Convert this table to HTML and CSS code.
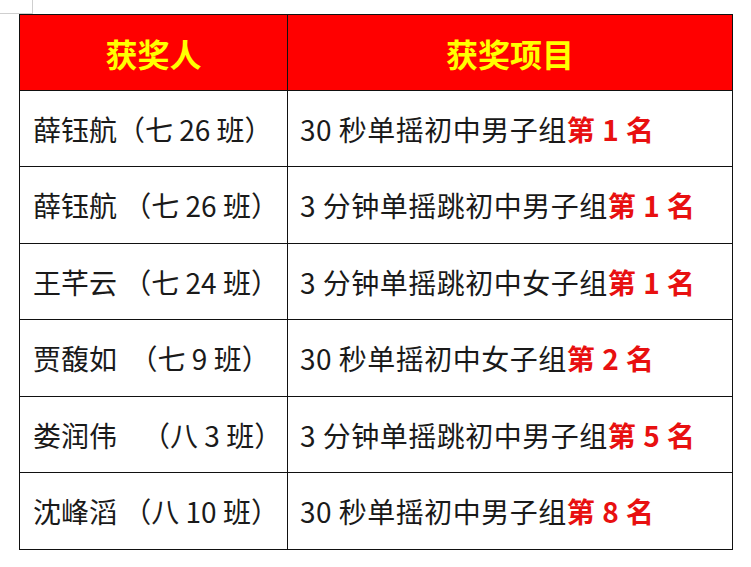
FILE: index.html
```html
<!DOCTYPE html>
<html lang="zh-CN">
<head>
<meta charset="utf-8">
<title>获奖名单</title>
<link rel="stylesheet" href="styles.css">
</head>
<body>
<div class="crop-mark"></div>
<div class="award-table">
  <div class="cell head">获奖人</div>
  <div class="cell head">获奖项目</div>

  <div class="cell name">薛钰航（七 26 班）</div>
  <div class="cell item">30 秒单摇初中男子组<span class="rank">第 1 名</span></div>

  <div class="cell name">薛钰航 （七 26 班）</div>
  <div class="cell item">3 分钟单摇跳初中男子组<span class="rank">第 1 名</span></div>

  <div class="cell name">王芊云 （七 24 班）</div>
  <div class="cell item">3 分钟单摇跳初中女子组<span class="rank">第 1 名</span></div>

  <div class="cell name">贾馥如 &nbsp;（七 9 班）</div>
  <div class="cell item">30 秒单摇初中女子组<span class="rank">第 2 名</span></div>

  <div class="cell name">娄润伟 &nbsp; &nbsp;（八 3 班）</div>
  <div class="cell item">3 分钟单摇跳初中男子组<span class="rank">第 5 名</span></div>

  <div class="cell name">沈峰滔 （八 10 班）</div>
  <div class="cell item">30 秒单摇初中男子组<span class="rank">第 8 名</span></div>
</div>
</body>
</html>
```

FILE: styles.css
```css
html, body {
  margin: 0;
  background: #ffffff;
}

body {
  padding: 14px 0 0 19px;
  font-family: "Noto Sans CJK SC", "Noto Sans", sans-serif;
  color: #1a1a1a;
}

.crop-mark {
  position: absolute;
  left: 0;
  top: 0;
  width: 32px;
  height: 13px;
  border-right: 1px solid #cfcfcf;
  border-bottom: 1px solid #cfcfcf;
}

.award-table {
  display: grid;
  grid-template-columns: 268px 445px;
  grid-template-rows: 76px 76px 77px 76px 77px 76px 77px;
  width: 713px;
  border-left: 1px solid #111111;
  border-top: 1px solid #111111;
}

.cell {
  box-sizing: border-box;
  border-right: 1px solid #111111;
  border-bottom: 1px solid #111111;
  display: flex;
  align-items: center;
  font-size: 28px;
  line-height: 1;
  white-space: pre;
}

.head {
  background: #ff0000;
  color: #ffff00;
  font-weight: bold;
  font-size: 32px;
  justify-content: center;
}

.name {
  padding-left: 13px;
}

.item {
  padding-left: 12px;
  letter-spacing: 0.5px;
}

.rank {
  color: #e81010;
  font-weight: bold;
}
```
